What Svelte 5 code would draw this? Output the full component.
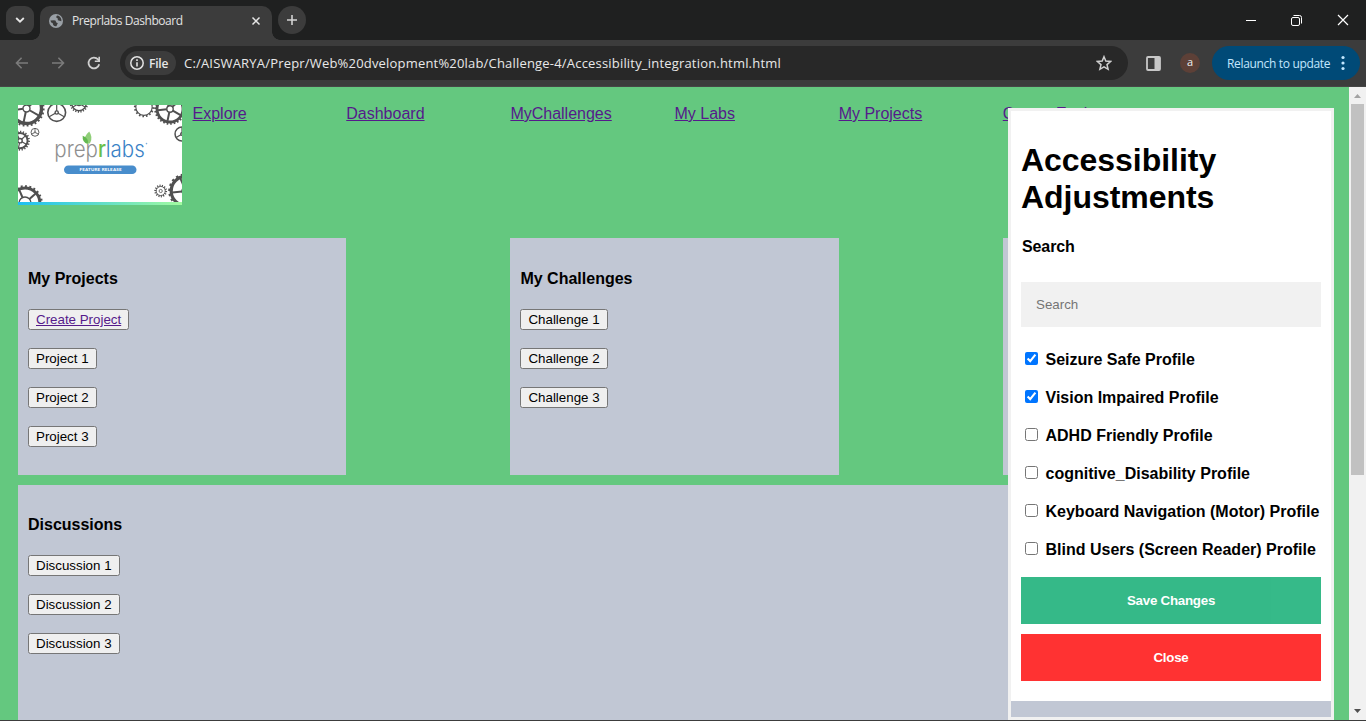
<script>
  const links = ['Dashboard', 'MyChallenges', 'My Labs', 'My Projects', 'Career Explorer'];
  const projects = ['Project 1', 'Project 2', 'Project 3'];
  const challenges = ['Challenge 1', 'Challenge 2', 'Challenge 3'];
  const discussions = ['Discussion 1', 'Discussion 2', 'Discussion 3'];
  let profiles = $state([
    { name: 'Seizure Safe Profile', on: true },
    { name: 'Vision Impaired Profile', on: true },
    { name: 'ADHD Friendly Profile', on: false },
    { name: 'cognitive_Disability Profile', on: false },
    { name: 'Keyboard Navigation (Motor) Profile', on: false },
    { name: 'Blind Users (Screen Reader) Profile', on: false }
  ]);
  // x, y, outer radius, ring width, tooth count, spokes, inner hub radius
  const gears = [
    [8.5, 3.5, 18.3, 3.4, 26, 5, 3.5],
    [38.7, 7.5, 11.3, 1.6, 0, 3, 1.6],
    [61, -1.5, 9.5, 1.4, 20, 3, 2],
    [17, 27.3, 6, 0.9, 0, 3, 0.7],
    [2, 35.7, 10.2, 2, 20, 5, 2.2],
    [126, 2.2, 10.3, 1.1, 16, 0, 0],
    [152, 4, 16, 2.8, 26, 5, 3.2],
    [164, 29, 9.3, 1.5, 0, 3, 1.3],
    [142.7, 86, 6.6, 0.9, 14, 0, 1.6],
    [168, 86, 18, 3.2, 20, 5, 4],
    [7, 98, 18, 3, 24, 5, 6]
  ];
  const spokesOf = (n) => Array.from({ length: n }, (_, i) => (360 / n) * i + 30);
</script>

<div class="window">
  <div class="tabs">
    <div class="tabsearch"><svg width="10" height="8" viewBox="0 0 10 8"><path d="M1.2 2 5 5.7 8.8 2" fill="none" stroke="#e6e6e6" stroke-width="1.8" /></svg></div>
    <div class="tab">
      <svg width="14" height="14" viewBox="0 0 14 14"><circle cx="7" cy="7" r="7" fill="#9aa0a6" /><path d="M1.4 6.4 5.2 6.2Q7.4 6.2 7 8.2L8.8 9.2 7.4 12.2Q4.8 12.8 4 10.6 4.2 8.8 2.2 8.6ZM8 1.5 7 3.3 8.6 4.3 8.9 6.2 12.4 7.3Q12.7 3.3 9.5 1.8Z" fill="#3c3c3c" /></svg>
      <span class="title">Preprlabs Dashboard</span>
      <svg width="10" height="10" viewBox="0 0 10 10"><path d="m1.5 1.5 7 7M8.5 1.5l-7 7" stroke="#e6e6e6" stroke-width="1.5" /></svg>
    </div>
    <div class="newtab"><svg width="12" height="12" viewBox="0 0 12 12"><path d="M6 1v10M1 6h10" stroke="#d2d2d2" stroke-width="1.6" /></svg></div>
    <div class="controls">
      <svg width="10" height="10" viewBox="0 0 10 10"><path d="M0 5.5h10" stroke="#fff" /></svg>
      <svg width="11" height="11" viewBox="0 0 11 11"><rect x=".5" y="2.5" width="8" height="8" rx="1.5" fill="none" stroke="#fff" /><path d="M2.5 .5H8.5Q10.5.5 10.5 2.5V8.5" fill="none" stroke="#fff" /></svg>
      <svg width="12" height="12" viewBox="0 0 12 12"><path d="m1 1 10 10M11 1 1 11" stroke="#fff" stroke-width="1.2" /></svg>
    </div>
  </div>

  <div class="toolbar">
    <div class="history">
      <svg width="14" height="12" viewBox="0 0 14 12"><path d="M13 6H1.6M6.6.8 1.5 6l5.1 5.2" fill="none" stroke="#7b7b7b" stroke-width="1.6" /></svg>
      <svg width="14" height="12" viewBox="0 0 14 12"><path d="M1 6h11.4M7.4.8 12.5 6 7.4 11.2" fill="none" stroke="#7b7b7b" stroke-width="1.6" /></svg>
      <svg width="14" height="14" viewBox="0 0 14 14"><path d="M12.2 8.2A5.4 5.4 0 1 1 11 3.4L12.2 5" fill="none" stroke="#d0d0d0" stroke-width="1.8" /><path d="M13 .8V6H7.8V4.4h3.6V.8Z" fill="#d0d0d0" /></svg>
    </div>
    <div class="omnibox">
      <div class="chip">
        <svg width="14" height="14" viewBox="0 0 14 14"><circle cx="7" cy="7" r="6.2" fill="none" stroke="#e3e3e3" stroke-width="1.5" /><path d="M7 6.2v4.3M7 3.3v1.7" stroke="#e3e3e3" stroke-width="1.6" /></svg>
        <span>File</span>
      </div>
      <span class="url">C:/AISWARYA/Prepr/Web%20dvelopment%20lab/Challenge-4/Accessibility_integration.html.html</span>
      <svg width="16" height="16" viewBox="0 0 16 16"><path d="m8 1.7 1.8 4.4 4.8.4L11 9.6l1.1 4.7L8 11.8l-4.1 2.5L5 9.6 1.4 6.5l4.8-.4Z" fill="none" stroke="#cfcfcf" stroke-width="1.5" /></svg>
    </div>
    <svg class="panelicon" width="15" height="15" viewBox="0 0 15 15"><rect x="1" y="1" width="13" height="13" rx="1" fill="none" stroke="#c7c7c7" stroke-width="1.8" /><path d="M8.5 1H14v13H8.5Z" fill="#c7c7c7" /></svg>
    <div class="avatar">a</div>
    <div class="relaunch"><span>Relaunch to update</span><svg width="4" height="16" viewBox="0 0 4 16"><g fill="#c2e7ff"><circle cx="2" cy="2.5" r="1.6" /><circle cx="2" cy="8" r="1.6" /><circle cx="2" cy="13.5" r="1.6" /></g></svg></div>
  </div>

  <div class="viewport">
    <main>
      <header>
        <div class="brand">
          <svg class="logo" width="164" height="100" viewBox="0 0 164 100">
            <defs><linearGradient id="strip"><stop offset="0" stop-color="#1cc0f3" /><stop offset="1" stop-color="#a3fba0" /></linearGradient></defs>
            <rect width="164" height="100" fill="#fff" />
            {#each gears as [x, y, r, w, teeth, spokes, hub]}
              <g transform="translate({x} {y})" fill="none" stroke="#505050">
                <circle r={r - 1.6 - w / 2} stroke-width={w} />
                {#if teeth}<circle r={r - 1.2} stroke-width="2" pathLength={teeth * 2} stroke-dasharray=".9 1.1" />{/if}
                {#if hub}<circle r={hub} stroke-width={r < 8 ? 0.8 : 1.4} />{/if}
                {#each spokesOf(spokes) as a}<path d="M{hub} 0H{r - w - 1}" stroke-width={r > 12 ? 2 : r < 8 ? 0.8 : 1.2} transform="rotate({a})" />{/each}
              </g>
            {/each}
            <text class="word" x="36.3" y="51.8" textLength="90.5" lengthAdjust="spacingAndGlyphs"><tspan fill="#8f8f8f">prep</tspan><tspan class="green">r</tspan><tspan fill="#3a82c6">labs</tspan></text>
            <circle cx="128.5" cy="38.6" r=".8" fill="#7fb0dc" />
            <path d="M71.2 26.5Q65.5 31.5 67.3 36.5 70.5 40.5 72.3 37.5 75 32 71.2 26.5Z" fill="#8fce78" />
            <path d="M64.7 30.7Q64 37.5 69.8 39Q71.4 33.5 64.7 30.7Z" fill="#63b850" />
            <rect x="46" y="60.4" width="72.5" height="8.6" rx="4.3" fill="#488dcc" />
            <text class="feature" x="61.5" y="66.2" textLength="42">FEATURE RELEASE</text>
            <rect y="97" width="164" height="3" fill="url(#strip)" />
          </svg>
          <a href="#explore">Explore</a>
        </div>
        {#each links as link}<a href="#{link}">{link}</a>{/each}
      </header>

      <div class="cards">
        <section>
          <h4>My Projects</h4>
          <button><a href="#create">Create Project</a></button>
          {#each projects as p}<button>{p}</button>{/each}
        </section>
        <section>
          <h4>My Challenges</h4>
          {#each challenges as c}<button>{c}</button>{/each}
        </section>
        <section></section>
      </div>
      <section class="discussions">
        <h4>Discussions</h4>
        {#each discussions as d}<button>{d}</button>{/each}
      </section>
    </main>

    <div class="scrollbar">
      <svg width="17" height="17" viewBox="0 0 17 17"><path d="M5 11h7L8.5 7Z" fill="#a3a3a3" /></svg>
      <div class="thumb"></div>
      <svg width="17" height="17" viewBox="0 0 17 17"><path d="M5 6h7L8.5 10Z" fill="#505050" /></svg>
    </div>

    <aside>
      <div class="panel">
        <h1>Accessibility Adjustments</h1>
        <label class="searchlabel" for="q">Search</label>
        <input id="q" class="search" placeholder="Search" />
        <div class="profiles">
          {#each profiles as p}
            <label><input type="checkbox" bind:checked={p.on} /><span>{p.name}</span></label>
          {/each}
        </div>
        <button class="action save">Save Changes</button>
        <button class="action close">Close</button>
      </div>
    </aside>
  </div>
</div>

<style>
  :global(body) { margin: 0; overflow: hidden; background: #3c3c3c; }
  * { box-sizing: border-box; }
  .window { width: 1366px; height: 721px; overflow: hidden; display: flex; flex-direction: column; background: #3c3c3c; font-family: "Liberation Sans", Arial, sans-serif; }
  svg { display: block; flex: none; }
  .tabs { height: 40px; flex: none; background: #1f2020; display: flex; padding: 6px 17px 0 6px; font-family: "Open Sans", sans-serif; }
  .tabsearch { width: 28px; height: 28px; border-radius: 9px; background: #3c3c3c; display: grid; place-items: center; }
  .tab { position: relative; width: 232px; height: 34px; margin-left: 6px; padding: 0 11px 5px 9px; border-radius: 10px 10px 0 0; background: #3c3c3c; display: flex; align-items: center; color: #e3e3e3; font-size: 12px; }
  .tab::before, .tab::after { content: ""; position: absolute; bottom: 0; width: 8px; height: 8px; }
  .tab::before { left: -8px; background: radial-gradient(circle at 0 0, transparent 7.5px, #3c3c3c 8px); }
  .tab::after { right: -8px; background: radial-gradient(circle at 100% 0, transparent 7.5px, #3c3c3c 8px); }
  .title { flex: 1; margin-left: 9px; letter-spacing: -0.43px; white-space: nowrap; }
  .newtab { width: 28px; height: 28px; margin-left: 6px; border-radius: 50%; background: #3c3c3c; display: grid; place-items: center; }
  .controls { margin-left: auto; display: flex; gap: 35px; height: 28px; align-items: center; }
  .toolbar { height: 47px; flex: none; background: #3c3c3c; display: flex; align-items: center; padding: 0 6px 0 15px; font-family: "Open Sans", sans-serif; border-bottom: 1px solid #464646; }
  .history { display: flex; align-items: center; gap: 22px; width: 105px; }
  .omnibox { width: 1008px; height: 34px; border-radius: 17px; background: #282828; display: flex; align-items: center; padding: 0 16px 0 5px; color: #e8e8e8; font-size: 13px; }
  .chip { width: 51px; height: 24px; border-radius: 12px; background: #3c3c3c; display: flex; align-items: center; padding-left: 5px; gap: 5px; font-size: 12px; font-weight: 600; }
  .chip span { letter-spacing: -0.2px; }
  .url { flex: 1; margin-left: 8px; letter-spacing: 0.19px; white-space: nowrap; }
  .panelicon { margin-left: 18px; }
  .avatar { width: 20px; height: 20px; margin-left: 19px; border-radius: 50%; background: #5d4037; color: #eee; font-size: 11px; line-height: 18px; text-align: center; }
  .relaunch { width: 148px; height: 34px; margin-left: 12px; border-radius: 17px; background: #004a77; color: #c2e7ff; display: flex; align-items: center; justify-content: space-between; padding: 0 15px; font-size: 12px; letter-spacing: -0.33px; white-space: nowrap; }
  .viewport { position: relative; height: 633px; flex: none; display: flex; overflow: hidden; }
  main { width: 1349px; background: #64c87f; padding: 18px 18px 0; overflow: hidden; }
  header { height: 133px; display: grid; grid-template-columns: 328.25px repeat(5, 164.125px); align-items: start; line-height: 18px; }
  .brand { display: flex; gap: 10.5px; }
  a { color: #551a8b; text-decoration: underline; white-space: nowrap; }
  .word { font: 300 22.3px Inter, sans-serif; }
  .green { fill: #6abf4b; font-weight: 500; }
  .feature { font: 900 4.5px Lato, sans-serif; fill: #fff; }
  .cards { height: 237px; display: grid; grid-template-columns: repeat(3, 328.25px); column-gap: 164.2px; margin-bottom: 10px; }
  section { background: #c1c7d4; padding: 32px 10px 0; display: flex; flex-direction: column; align-items: flex-start; gap: 18px; }
  .discussions { height: 300px; padding-top: 31px; }
  h4 { margin: 0 0 3px; font-size: 16px; line-height: 18px; }
  section button { height: 21px; padding: 0 7px; border: 1px solid #767676; border-radius: 2.5px; background: #efefef; color: #000; font: 13.333px "Liberation Sans", Arial, sans-serif; }
  .scrollbar { width: 17px; background: #f1f1f1; display: flex; flex-direction: column; }
  .thumb { width: 13px; height: 371px; margin: 0 2px auto; background: #c1c1c1; }
  aside { position: absolute; left: 1008px; top: 21px; width: 326px; height: 612px; border: 3px solid #f1f1f1; background: #c1c7d4; }
  .panel { height: 590px; padding: 31px 10px 0; background: #fff; display: flex; flex-direction: column; }
  h1 { margin: 0; font-size: 32px; line-height: 37px; letter-spacing: -0.04px; }
  .searchlabel { margin: 22px 0 26px 1px; font-size: 16px; font-weight: 700; line-height: 18px; letter-spacing: -0.1px; }
  .search { height: 45px; flex: none; border: 0; background: #f1f1f1; padding: 0 15px; font: 13.333px "Liberation Sans", Arial, sans-serif; }
  .search::placeholder { color: #757575; }
  .profiles { margin-top: 13px; }
  .profiles label { display: flex; align-items: center; height: 38px; padding-left: 4px; font-size: 16px; font-weight: 700; white-space: nowrap; }
  .profiles input { width: 13px; height: 13px; margin: 0 7.5px 1px 0; }
  .profiles span { padding-top: 2px; }
  .action { height: 47px; flex: none; border: 0; color: #fff; font: 700 13.333px "Liberation Sans", Arial, sans-serif; letter-spacing: -0.25px; opacity: .9; }
  .save { background: #20b27c; margin-top: 9px; }
  .close { background: #ff1c1c; margin-top: 10px; }
</style>
